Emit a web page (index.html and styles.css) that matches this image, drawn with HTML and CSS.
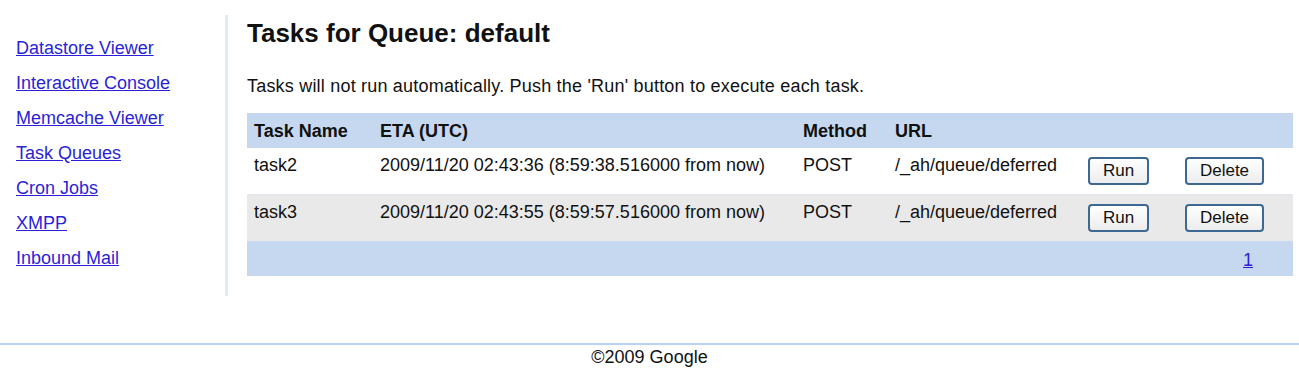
FILE: index.html
```html
<!DOCTYPE html>
<html lang="en">
<head>
    <meta charset="UTF-8">
    <title>Task Queues</title>
    <link rel="stylesheet" href="styles.css">
</head>
<body>

    <div class="page">
        <div class="nav">
            <a href="#">Datastore Viewer</a>
            <a href="#">Interactive Console</a>
            <a href="#">Memcache Viewer</a>
            <a href="#">Task Queues</a>
            <a href="#">Cron Jobs</a>
            <a href="#">XMPP</a>
            <a href="#">Inbound Mail</a>
        </div>

        <div class="main">
            <h1>Tasks for Queue: default</h1>
            <p>Tasks will not run automatically. Push the 'Run' button to execute each task.</p>

            <table class="tasks">
                <thead>
                    <tr>
                        <th class="c-name">Task Name</th>
                        <th class="c-eta">ETA (UTC)</th>
                        <th class="c-method">Method</th>
                        <th class="c-url">URL</th>
                        <th class="c-run"></th>
                        <th class="c-del"></th>
                    </tr>
                </thead>
                <tbody>
                    <tr>
                        <td>task2</td>
                        <td>2009/11/20 02:43:36 (8:59:38.516000 from now)</td>
                        <td>POST</td>
                        <td>/_ah/queue/deferred</td>
                        <td><button class="run">Run</button></td>
                        <td><button class="delete">Delete</button></td>
                    </tr>
                    <tr class="alt">
                        <td>task3</td>
                        <td>2009/11/20 02:43:55 (8:59:57.516000 from now)</td>
                        <td>POST</td>
                        <td>/_ah/queue/deferred</td>
                        <td><button class="run">Run</button></td>
                        <td><button class="delete">Delete</button></td>
                    </tr>
                </tbody>
                <tfoot>
                    <tr>
                        <td colspan="6" class="pager"><a href="#">1</a></td>
                    </tr>
                </tfoot>
            </table>
        </div>
    </div>

    <div class="footer">©2009 Google</div>

</body>
</html>
```

FILE: styles.css
```css
body {
    font-family: 'Liberation Sans', Arial, sans-serif;
    font-size: 18px;
    color: #111;
    background-color: #fff;
    margin: 0;
}
a {
    color: #2a1fd6;
}
.page {
    display: flex;
    align-items: flex-start;
    padding-top: 15px;
}
.nav {
    width: 228px;
    box-sizing: border-box;
    padding: 16px 0 20px 16px;
    border-right: 3px solid #e1eaf8;
    display: flex;
    flex-direction: column;
}
.nav a {
    line-height: 35px;
    height: 35px;
}
.main {
    padding-left: 19px;
    flex: 1;
}
h1 {
    font-size: 26px;
    margin: 3px 0 0 0;
    line-height: 30px;
}
p {
    margin: 27px 0 0 0;
    line-height: 22px;
    letter-spacing: 0.2px;
}
.tasks {
    margin-top: 16px;
    width: 1046px;
    border-collapse: collapse;
    table-layout: fixed;
}
.tasks th,
.tasks td {
    box-sizing: border-box;
    text-align: left;
    vertical-align: top;
    padding: 6px 7px;
    line-height: 22px;
    white-space: nowrap;
}
.tasks thead tr,
.tasks tfoot tr {
    background-color: #c6d8f0;
}
.tasks th {
    height: 35px;
    padding-top: 7px;
}
.c-name { width: 126px; }
.c-eta { width: 423px; }
.c-method { width: 92px; }
.c-url { width: 193px; }
.c-run { width: 97px; }
.tasks tbody tr {
    background-color: #fff;
}
.tasks tbody tr.alt {
    background-color: #e9e9e9;
    border-top: 1px solid #dfe6f0;
}
.tasks td.pager {
    height: 35px;
    text-align: right;
    padding: 8px 40px 5px 0;
}
button {
    display: block;
    font-family: 'Liberation Sans', Arial, sans-serif;
    font-size: 17px;
    height: 28px;
    margin: 3px 0;
    padding: 0;
    border: 2px solid #3d6891;
    border-radius: 4px;
    background: linear-gradient(#ffffff, #ececec);
    color: #111;
}
button.run {
    width: 61px;
}
button.delete {
    width: 79px;
}
.footer {
    margin-top: 47px;
    border-top: 2px solid #b9d1f7;
    text-align: center;
    padding-top: 1px;
    line-height: 22px;
}
```
